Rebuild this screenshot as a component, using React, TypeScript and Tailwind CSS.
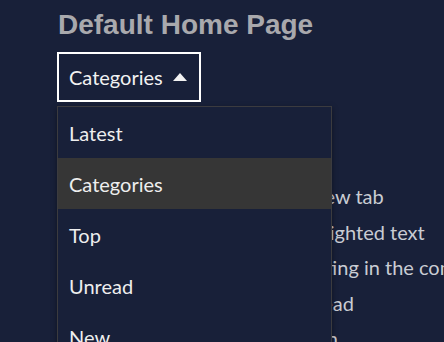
import React from 'react';

const items = ['Latest', 'Categories', 'Top', 'Unread', 'New'];

// indents keep each line where it peeks out from under the open menu
const prefs = [
  { text: 'Open all external links in a new tab', cls: 'pl-[20px]' },
  { text: 'Enable quote reply for highlighted text', cls: 'pl-[31px]' },
  { text: 'Enable smart list formatting in the composer', cls: 'pl-[60px]' },
  { text: 'Defer to mark topics unread', cls: 'pl-[50px]' },
  { text: 'Unpin topics when I scroll down', cls: 'pl-0' },
];

const App: React.FC = () => {
  return (
    <div
      className="w-[444px] h-[342px] overflow-hidden bg-[#182039] pl-[58px] pt-[8px]"
      style={{ fontFamily: 'Lato, "Noto Sans", sans-serif' }}
    >
      <h2
        className="text-[28px] leading-[34px] font-bold text-[#a9a9ad]"
        style={{ fontFamily: '"Liberation Sans", Arial, sans-serif' }}
      >
        Default Home Page
      </h2>
      <div className="relative mt-[10px]">
        <button className="h-[50px] w-[144px] -ml-px flex items-center gap-[10px] border-2 border-white px-[10px] text-[20px] text-[#f2f2f2]">
          <span>Categories</span>
          <svg width="14" height="8" viewBox="0 0 14 8">
            <path d="M7 0 L14 8 L0 8 Z" fill="#f2f2f2" />
          </svg>
        </button>

        <div className="mt-[77px] flex flex-col text-[20px] leading-[35.5px] text-[#c9ccd3] whitespace-nowrap">
          {prefs.map((p) => (
            <div key={p.text} className={p.cls}>{p.text}</div>
          ))}
        </div>

        <ul className="absolute left-[-1px] top-[54px] w-[275px] border border-[#3b3b3f] bg-[#182039] shadow-[0_2px_6px_rgba(0,0,0,0.4)]">
          {items.map((it) => (
            <li
              key={it}
              className={`h-[51px] flex items-center px-[11px] text-[20px] text-[#eeeeee] ${
                it === 'Categories' ? 'bg-[#363636]' : ''
              }`}
            >
              {it}
            </li>
          ))}
        </ul>
      </div>
    </div>
  );
};

export default App;
